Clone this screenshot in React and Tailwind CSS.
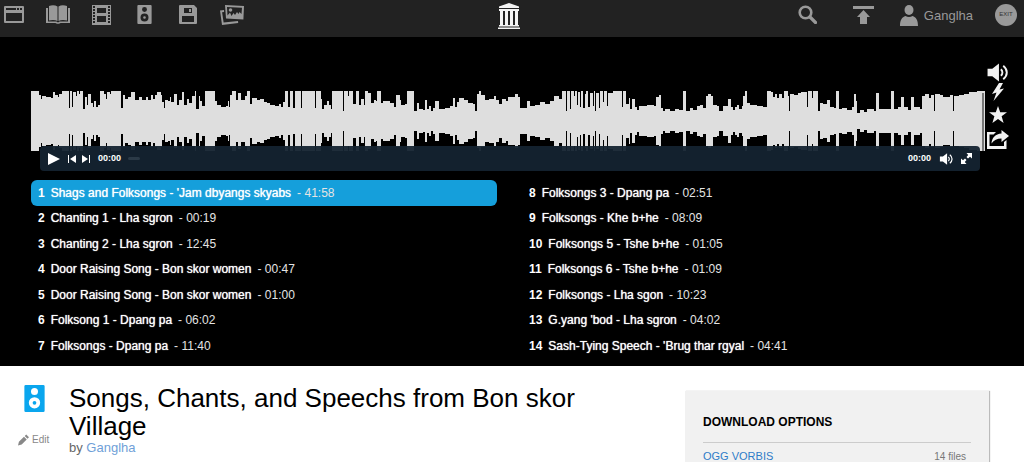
import { useState } from "react";

const TRACKS = [
  { title: "Shags and Folksongs - 'Jam dbyangs skyabs", time: "41:58" },
  { title: "Chanting 1 - Lha sgron", time: "00:19" },
  { title: "Chanting 2 - Lha sgron", time: "12:45" },
  { title: "Door Raising Song - Bon skor women", time: "00:47" },
  { title: "Door Raising Song - Bon skor women", time: "01:00" },
  { title: "Folksong 1 - Dpang pa", time: "06:02" },
  { title: "Folksongs - Dpang pa", time: "11:40" },
  { title: "Folksongs 3 - Dpang pa", time: "02:51" },
  { title: "Folksongs - Khe b+he", time: "08:09" },
  { title: "Folksongs 5 - Tshe b+he", time: "01:05" },
  { title: "Folksongs 6 - Tshe b+he", time: "01:09" },
  { title: "Folksongs - Lha sgon", time: "10:23" },
  { title: "G.yang 'bod - Lha sgron", time: "04:02" },
  { title: "Sash-Tying Speech - 'Brug thar rgyal", time: "04:41" },
];

// Each entry is "x:depth", depth being how far the peak stays below full volume
const WAVE = `
0:0 8:4 10:8 11:5 15:6 20:7 22:1 24:4 27:6 28:3 31:0 38:17 39:0 41:16 42:1 45:5 46:0 48:3 49:0 52:18 54:6 56:14
57:3 60:12 62:16 63:10 65:16 67:14 69:0 73:3 75:8 76:1 79:3 80:0 90:17 92:4 94:8 97:6 100:1 104:9 108:6 111:9
115:6 117:9 120:4 122:8 124:4 126:1 130:4 131:11 133:17 134:9 137:10 139:6 140:11 143:3 146:14 148:9 151:1 153:14
156:8 158:12 161:5 164:0 165:18 168:5 169:10 171:15 174:0 184:10 186:14 190:16 195:15 197:10 198:16 199:4 201:0
205:9 207:2 210:9 214:5 216:0 219:13 221:7 226:9 229:8 233:11 236:12 239:14 244:15 248:13 250:16 252:11 254:0
257:16 259:0 262:17 264:0 270:17 271:0 284:17 285:0 290:8 291:18 293:14 296:10 298:14 300:18 301:0 312:20 313:0
317:5 318:0 322:13 325:0 328:14 330:8 333:14 334:0 337:2 340:12 343:9 345:10 346:0 350:12 352:10 359:12 363:16
365:4 369:9 370:14 374:13 376:0 383:20 386:12 388:18 392:19 394:9 396:18 398:15 400:20 402:17 404:10 408:18
414:17 419:15 422:7 424:16 426:11 428:7 433:9 437:12 442:13 444:20 446:3 448:0 450:4 454:9 458:8 463:5 465:9
468:13 471:8 475:10 477:6 484:3 487:6 489:17 496:10 499:15 504:14 509:11 514:13 519:10 523:5 528:8 531:0 535:20
536:0 539:18 540:0 543:5 544:0 546:14 547:1 549:16 550:0 552:17 554:3 555:0 557:16 559:2 562:15 563:0 564:20 565:2
568:17 569:0 572:11 573:0 576:15 577:2 582:0 591:16 592:0 595:13 598:7 599:18 601:8 604:16 606:19 608:15 616:14
623:15 625:6 628:4 630:17 632:20 634:18 639:20 644:18 648:19 652:0 655:20 659:17 662:19 666:15 669:14 672:17
675:5 677:3 680:5 682:14 686:15 688:20 692:15 697:8 700:16 702:19 704:16 706:14 708:18 711:15 712:5 714:0 716:12
719:14 726:15 732:16 736:0 740:1 742:6 744:3 746:7 748:3 751:7 753:0 757:5 758:20 759:3 763:4 767:2 770:1 776:16
777:0 781:7 782:0 787:20 789:12 792:13 796:9 799:16 803:17 805:0 808:18 811:17 816:19 821:16 823:3 825:10 826:22
829:19 833:21 836:18 843:20 845:2 848:18 860:0 863:18 867:16 870:6 873:16 877:19 880:6 883:16 889:18 891:5 894:3
898:7 900:4 903:20 904:3 909:4 912:6 919:4 922:20 923:5 928:4 933:3 938:1 946:0 954:0
`
  .trim()
  .split(/\s+/)
  .map((p) => p.split(":").map(Number));

const wavePath = () => {
  let top = "M0 30";
  let bottom = "";
  WAVE.forEach(([x, depth], i) => {
    const end = i + 1 < WAVE.length ? WAVE[i + 1][0] : 954;
    top += `L${x} ${depth}L${end} ${depth}`;
    bottom = `L${end} ${60 - depth}L${x} ${60 - depth}` + bottom;
  });
  return `${top}${bottom}Z`;
};

const Waveform = () => (
  <svg viewBox="0 0 954 60" preserveAspectRatio="none" className="block h-[60px] w-full" aria-hidden="true">
    <path d={wavePath()} fill="#dedede" />
    <path d="M951 2h2v58h-2z" fill="#777" />
  </svg>
);

const WebIcon = () => (
  <svg viewBox="0 0 20 17" className="h-[17px] w-5" fill="currentColor" fillRule="evenodd">
    <path d="M1 0h18a1 1 0 0 1 1 1v15a1 1 0 0 1-1 1H1a1 1 0 0 1-1-1V1a1 1 0 0 1 1-1zM2 2v2h10V2zM13 2v2h2V2zM16 2v2h2V2zM2 7v8h16V7z" />
  </svg>
);

const BookIcon = () => (
  <svg viewBox="0 0 24 19" className="h-[19px] w-6" fill="currentColor">
    <path d="M3 1c3-1 6-1 8.500.5V16C9 14.700 6 14.700 3 15.500zM21 1c-3-1-6-1-8.500.5V16c2.500-1.300 5.500-1.300 8.500-.5z" />
    <path d="M0 3h2v13.500h8c1 0 1 .8 2 .8s1-.8 2-.8h8V3h2v15H14.500c-.5 1-4.500 1-5 0H0z" />
  </svg>
);

const FilmIcon = () => (
  <svg viewBox="0 0 19 20" className="h-5 w-[19px]" fill="currentColor" fillRule="evenodd">
    <path d="M0 0h19v20H0zM1 1v2h2V1zM1 4v2h2V4zM1 7v2h2V7zM1 10v2h2v-2zM1 13v2h2v-2zM1 16v2h2v-2zM16 1v2h2V1zM16 4v2h2V4zM16 7v2h2V7zM16 10v2h2v-2zM16 13v2h2v-2zM16 16v2h2v-2zM5 3v5h9V3zM5 11v6h9v-6z" />
  </svg>
);

const SpeakerIcon = ({ className }) => (
  <svg viewBox="0 0 15 20" className={className} fill="currentColor" fillRule="evenodd">
    <path d="M1 0h13a1 1 0 0 1 1 1v18a1 1 0 0 1-1 1H1a1 1 0 0 1-1-1V1a1 1 0 0 1 1-1zM7.500 2.200a2.600 2.600 0 1 0 0 5.200 2.600 2.600 0 1 0 0-5.200zM7.500 9a4.200 4.200 0 1 0 0 8.400 4.200 4.200 0 1 0 0-8.400zM7.500 11.800a1.400 1.400 0 1 1 0 2.800 1.400 1.400 0 1 1 0-2.800z" />
  </svg>
);

const FloppyIcon = () => (
  <svg viewBox="0 0 18 19" className="h-[19px] w-[18px]" fill="currentColor" fillRule="evenodd">
    <path d="M1 0h14l3 3v15a1 1 0 0 1-1 1H1a1 1 0 0 1-1-1V1a1 1 0 0 1 1-1zM5 3v5h8V3zM10 4h2v3h-2zM3 11v6h12v-6z" />
  </svg>
);

const ImagesIcon = () => (
  <svg viewBox="0 0 24 20" className="h-5 w-6" fill="currentColor" fillRule="evenodd">
    <path d="M5 0l19 1-.6 13.500-17.400-1zM7 2l.5 8.500L10 7.500l1.500 3.500 2-3 1.500 2 2-3 1.500 2 1-2 2 2 .5-6.200z" />
    <circle cx="10.500" cy="5" r="1.800" />
    <path d="M0 5.500l4-.5.1 2-2 .3 1.500 10.300 14.400-1.600.2 2L2 20z" />
  </svg>
);

const ArchiveLogo = () => (
  <svg viewBox="0 0 24 26" className="h-[26px] w-6" fill="#f4f4f4">
    <path d="M12 0l10 3.500V5H2V3.500zM2 6h20v2H2zM2 22h20v1.500H2zM1 24.500h22V26H1z" />
    <path d="M3 8h3v14H3zM8 8h3v14H8zM13 8h3v14h-3zM18 8h3v14h-3z" />
  </svg>
);

const VolumeIcon = ({ className }) => (
  <svg viewBox="0 0 22 20" className={className} fill="none" stroke="currentColor" strokeWidth="2">
    <path d="M0 6h5l7-5.500v19L5 14H0z" fill="currentColor" stroke="none" />
    <path d="M14 6.500c2.200 2 2.200 5 0 7M16.500 3c5 4 5 10 0 14" />
  </svg>
);

const MEDIA = [
  { label: "Web", icon: <WebIcon />, box: "w-5" },
  { label: "Texts", icon: <BookIcon />, box: "w-6" },
  { label: "Video", icon: <FilmIcon />, box: "w-[19px]" },
  { label: "Audio", icon: <SpeakerIcon className="h-[19px] w-[15px]" />, box: "w-[23px]" },
  { label: "Software", icon: <FloppyIcon />, box: "w-5" },
  { label: "Images", icon: <ImagesIcon />, box: "w-6" },
];

const NavBar = () => (
  <header className="grid h-[37px] grid-cols-[1fr_auto_1fr] items-center bg-[#222] pr-[7px] pb-2 pl-1 text-[#999]">
    <nav className="flex items-center gap-[22px]">
      {MEDIA.map((item) => (
        <a key={item.label} href="#" aria-label={item.label} className={`flex justify-center ${item.box}`}>
          {item.icon}
        </a>
      ))}
    </nav>
    <a href="#" aria-label="Home" className="pt-[2px] pr-1">
      <ArchiveLogo />
    </a>
    <div className="flex items-center justify-end">
      <button type="button" aria-label="Search" className="mr-9">
        <svg viewBox="0 0 19 19" className="h-[19px] w-[19px]" fill="none" stroke="currentColor">
          <circle cx="7.500" cy="7.500" r="5.800" strokeWidth="2.600" />
          <path d="M12 12l5.500 5.500" strokeWidth="3.200" strokeLinecap="round" />
        </svg>
      </button>
      <button type="button" aria-label="Upload" className="mr-[26px]">
        <svg viewBox="0 0 21 18" className="h-[18px] w-[21px]" fill="currentColor">
          <path d="M0 0h21v3H0zM10.500 4l6.500 7h-3v7H7v-7H4z" />
        </svg>
      </button>
      <a href="#" className="mr-[22px] flex items-center gap-[6px] pt-[2px] text-[13px] leading-5">
        <svg viewBox="0 0 18 21" className="h-[21px] w-[18px]" fill="currentColor">
          <ellipse cx="9" cy="5" rx="4.500" ry="5" />
          <path d="M0 21c0-6 2-9 5.500-10 2 1.200 5 1.200 7 0 3.500 1 5.500 4 5.500 10z" />
        </svg>
        Ganglha
      </a>
      <button
        type="button"
        className="flex h-[22px] w-[22px] items-center justify-center rounded-full bg-[#999] text-[6px] text-[#333]"
      >
        EXIT
      </button>
    </div>
  </header>
);

const PlayerBar = () => (
  <div className="relative mr-[5px] ml-[9px] -mt-[5px] flex h-[25px] items-center rounded-sm bg-[#142330]/95 pr-2 pl-2 text-[9px] font-bold">
    <button type="button" aria-label="Play">
      <svg viewBox="0 0 12 12" className="h-3 w-3" fill="currentColor">
        <path d="M0 0l12 6-12 6z" />
      </svg>
    </button>
    <button type="button" aria-label="Previous" className="ml-2">
      <svg viewBox="0 0 8 8" className="h-2 w-2" fill="currentColor">
        <path d="M0 0h1v8H0zM8 0v8L2 4z" />
      </svg>
    </button>
    <button type="button" aria-label="Next" className="ml-[6px]">
      <svg viewBox="0 0 8 8" className="h-2 w-2" fill="currentColor">
        <path d="M7 0h1v8H7zM0 0v8l6-4z" />
      </svg>
    </button>
    <span className="ml-2">00:00</span>
    <span className="ml-[7px] h-[3px] w-3 rounded-full bg-[#2b3a47]" />
    <span className="ml-auto">00:00</span>
    <button type="button" aria-label="Mute" className="ml-2">
      <VolumeIcon className="h-3 w-[15px]" />
    </button>
    <button type="button" aria-label="Fullscreen" className="ml-[7px]">
      <svg viewBox="0 0 11 11" className="h-[11px] w-[11px]" fill="currentColor">
        <path d="M5.500 0H11v5.500L9 3.800 7 5.500 5.500 4l1.700-2zM0 5.500l2 1.700L4 5.500 5.500 7 3.800 9l1.700 2H0z" />
      </svg>
    </button>
  </div>
);

const SideActions = () => (
  <div className="ml-[2px] flex w-[22px] flex-col items-center pt-[26px] text-[#f2f2f2]">
    <button type="button" aria-label="Volume">
      <VolumeIcon className="h-[19px] w-[22px]" />
    </button>
    <button type="button" aria-label="Flag" className="mt-[1px]">
      <svg viewBox="0 0 12 18" className="h-[18px] w-3" fill="currentColor">
        <path d="M7 0h4L7.500 6.500 12 5.500 1.500 18l3-8.500L0 11z" />
      </svg>
    </button>
    <button type="button" aria-label="Favorite" className="mt-[5px]">
      <svg viewBox="0 0 18 17" className="h-[17px] w-[18px]" fill="currentColor">
        <path d="M9 0l2.200 6.200H18l-5.400 4.100 2 6.700L9 13l-5.600 4 2-6.700L0 6.200h6.800z" />
      </svg>
    </button>
    <button type="button" aria-label="Share" className="mt-[6px]">
      <svg viewBox="0 0 22 20" className="h-5 w-[22px]" fill="currentColor">
        <path d="M0 3h9L6.500 5.500H2.500v11.500h14.500v-4l2.500-2V20H0z" />
        <path d="M14.500 1L22 7l-7.500 6V9.500C10 9.500 7 11 4.500 14.500 5 8.500 8.500 5 14.500 4.500z" />
      </svg>
    </button>
  </div>
);

const Playlist = () => {
  const [current, setCurrent] = useState(0);

  return (
    <ol className="mt-[9px] mr-9 ml-[31px] grid h-[178px] grid-flow-col grid-cols-2 grid-rows-7 gap-x-[25px] text-[12px]">
      {TRACKS.map((track, index) => (
        <li key={index}>
          <button
            type="button"
            onClick={() => setCurrent(index)}
            className={`flex h-[26px] w-full items-center rounded-md px-[7px] text-left ${
              current === index ? "bg-[#159fdb]" : ""
            }`}
          >
            <b>{index + 1}</b>
            <span className="ml-[6px] [text-shadow:0_0_1px_#fff]">{track.title}</span>
            <span className="ml-[6px] text-[#e4e4e4]">- {track.time}</span>
          </button>
        </li>
      ))}
    </ol>
  );
};

const App = () => (
  <div className="flex min-h-screen flex-col bg-white font-['Helvetica_Neue','Liberation_Sans',Arial,sans-serif]">
    <NavBar />

    <section className="bg-black pb-2 text-white">
      <div className="flex pr-[15px] pl-[31px]">
        <div className="min-w-0 flex-1 pt-[54px]">
          <Waveform />
          <PlayerBar />
        </div>
        <SideActions />
      </div>
      <Playlist />
    </section>

    <main className="flex flex-1">
      <div className="flex w-[69px] flex-col pt-[19px] text-[#888]">
        <SpeakerIcon className="ml-6 h-[27px] w-[21px] text-[#0aa6ee]" />
        <a href="#" className="mt-[22px] ml-[18px] flex items-center gap-[3px] text-[10px] leading-3">
          <svg viewBox="0 0 12 12" className="h-3 w-[11px]" fill="currentColor">
            <path d="M0 12l1-4 5.500-5.500 3 3L4 11zM7.300 1.700L9 0l3 3-1.700 1.700z" />
          </svg>
          Edit
        </a>
      </div>

      <div className="flex-1 pt-[18px] pr-8">
        <h1 className="text-[26px] leading-7 text-black">Songs, Chants, and Speechs from Bon skor Village</h1>
        <p className="text-[13px] leading-4 text-[#666]">
          by{" "}
          <a href="#" className="text-[#6f9fd8]">
            Ganglha
          </a>
        </p>
      </div>

      <aside className="mt-[25px] mr-[35px] w-[304px] bg-[#f1f1f1] px-[18px] pt-[23px] shadow-[1px_0_1px_#bbb]">
        <h2 className="border-b border-[#ccc] pb-3 text-[12px] leading-4 font-bold text-black">DOWNLOAD OPTIONS</h2>
        <div className="flex items-end justify-between pt-[6px] pr-[5px]">
          <a href="#" className="text-[11px] leading-[14px] text-[#2f7cc8]">
            OGG VORBIS
          </a>
          <span className="text-[10px] leading-3 text-[#777]">14 files</span>
        </div>
      </aside>
    </main>
  </div>
);

export default App;
